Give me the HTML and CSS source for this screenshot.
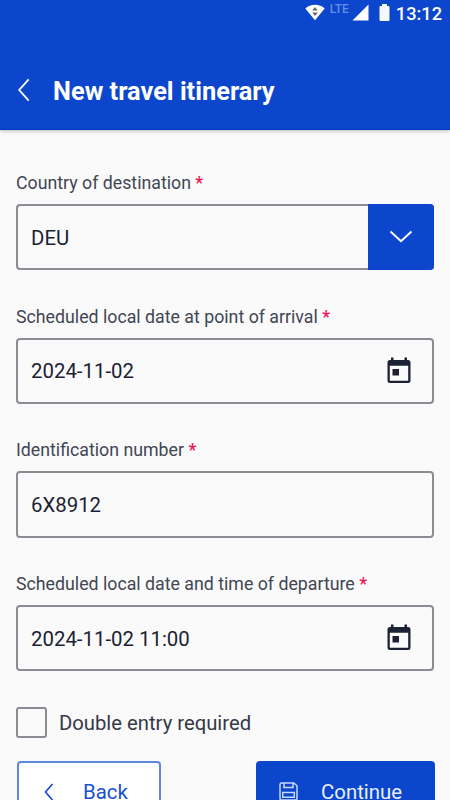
FILE: index.html
```html
<!DOCTYPE html>
<html lang="en">
<head>
    <meta charset="UTF-8">
    <meta name="viewport" content="width=device-width, initial-scale=1.0">
    <title>New travel itinerary</title>
    <link rel="stylesheet" href="styles.css">
</head>
<body>
    <header class="header">
        <div class="status-bar">
            <svg class="wifi" width="20" height="17" viewBox="0 0 20 17">
                <path d="M0.3 4.5C5.6-0.4 14.4-0.4 19.7 4.5L10 16.3Z" fill="#fff"/>
                <path d="M10 3l2.8 3.6H7.2zM10 12L7.2 8.4h5.6z" fill="#666"/>
            </svg>
            <span class="network">LTE</span>
            <svg class="signal" width="17" height="17" viewBox="0 0 17 17">
                <path d="M16.5 0.5v16H0.5z" fill="#fff"/>
            </svg>
            <svg class="battery" width="11" height="17" viewBox="0 0 11 17">
                <path d="M3 0h5v2h1.5q1 0 1 1v13q0 1-1 1h-8q-1 0-1-1V3q0-1 1-1H3z" fill="#f5f8ff"/>
            </svg>
            <span class="time">13:12</span>
        </div>
        <div class="title-bar">
            <svg class="arrow" width="12" height="24" viewBox="0 0 12 24">
                <path d="M10.7 1.3L1.2 12l9.5 10.7" fill="none" stroke="#fff" stroke-width="1.8"/>
            </svg>
            <h1>New travel itinerary</h1>
        </div>
    </header>

    <main class="form">
        <div class="field">
            <div class="label">Country of destination <span class="required">*</span></div>
            <div class="input select">
                <span class="value">DEU</span>
                <div class="select-button">
                    <svg width="24" height="14" viewBox="0 0 24 14">
                        <path d="M1.5 1.5L12 11.2 22.5 1.5" fill="none" stroke="#fff" stroke-width="2"/>
                    </svg>
                </div>
            </div>
        </div>
        <div class="field">
            <div class="label">Scheduled local date at point of arrival <span class="required">*</span></div>
            <div class="input">
                <span class="value">2024-11-02</span>
                <svg class="calendar" width="24" height="27" viewBox="0 0 24 27">
                    <path d="M3 3h18q2.5 0 2.5 2.5v18q0 2.5-2.5 2.5H3q-2.5 0-2.5-2.5v-18Q.5 3 3 3zM2.8 8.8v14.9h18.4V8.8zM4 .5h2.5V3H4zM17.5.5H20V3h-2.5zM5.5 12H12v6.5H5.5z" fill="#1b2233" fill-rule="evenodd"/>
                </svg>
            </div>
        </div>
        <div class="field">
            <div class="label">Identification number <span class="required">*</span></div>
            <div class="input"><span class="value">6X8912</span></div>
        </div>
        <div class="field">
            <div class="label">Scheduled local date and time of departure <span class="required">*</span></div>
            <div class="input">
                <span class="value">2024-11-02 11:00</span>
                <svg class="calendar" width="24" height="27" viewBox="0 0 24 27">
                    <path d="M3 3h18q2.5 0 2.5 2.5v18q0 2.5-2.5 2.5H3q-2.5 0-2.5-2.5v-18Q.5 3 3 3zM2.8 8.8v14.9h18.4V8.8zM4 .5h2.5V3H4zM17.5.5H20V3h-2.5zM5.5 12H12v6.5H5.5z" fill="#1b2233" fill-rule="evenodd"/>
                </svg>
            </div>
        </div>
        <div class="checkbox-row">
            <span class="checkbox"></span>
            <span>Double entry required</span>
        </div>
        <div class="buttons">
            <div class="button back">
                <svg width="10" height="18" viewBox="0 0 10 18">
                    <path d="M8.5 1L1.5 9l7 8" fill="none" stroke="#1650d0" stroke-width="1.7"/>
                </svg>
                <span>Back</span>
            </div>
            <div class="button continue">
                <svg width="19" height="19" viewBox="0 0 19 19" fill="none" stroke="#c5d7ff" stroke-width="1.5">
                    <path d="M2.5 1h12.3L18 3.8v12.7q0 1.5-1.5 1.5h-14Q1 18 1 16.5v-14Q1 1 2.5 1zM5 1v4.5h9V1M3.7 10.5h11.6v4.7H3.7z"/>
                </svg>
                <span>Continue</span>
            </div>
        </div>
    </main>
</body>
</html>
```
FILE: styles.css
```css
* {
    box-sizing: border-box;
}
body {
    margin: 0;
    height: 800px;
    overflow: hidden;
    font-family: Roboto, sans-serif;
    background-color: #fafafa;
    color: #1b2233;
}
svg {
    display: block;
    flex-shrink: 0;
}
.header {
    height: 130px;
    background-color: #0c46cc;
    border-bottom: 1px solid #0038c8;
    box-shadow: 0 1px 4px rgba(0, 0, 0, 0.25);
    color: white;
}
.status-bar {
    display: flex;
    justify-content: flex-end;
    height: 26px;
    padding: 4px 8px 0 0;
}
.wifi {
    margin-right: 5px;
}
.network {
    margin: -1px 3px 0 0;
    font-size: 12px;
    line-height: 12px;
    font-weight: 500;
    color: #658ce6;
}
.battery {
    margin: 0 6px 0 10px;
}
.time {
    font-size: 18.2px;
    line-height: 20px;
    font-weight: 500;
}
.title-bar {
    display: flex;
    align-items: center;
    gap: 23px;
    height: 30px;
    margin-top: 50px;
    padding-left: 18px;
}
.arrow {
    margin-bottom: 3px;
}
h1 {
    margin: 0;
    font-size: 25.4px;
    line-height: 30px;
    font-weight: 700;
}
.form {
    padding: 42px 16px 0;
}
.field {
    height: 133.7px;
}
.label {
    height: 32px;
    font-size: 17.75px;
    line-height: 22px;
    color: #414653;
    white-space: nowrap;
}
.required {
    font-weight: 500;
    color: #f0145a;
}
.input {
    display: flex;
    align-items: center;
    justify-content: space-between;
    width: 418px;
    height: 66.4px;
    padding: 0 21px 0 13px;
    border: 2px solid #8b8d95;
    border-radius: 4px;
    font-size: 20.4px;
    line-height: 25px;
}
.value {
    padding-top: 2px;
}
.calendar {
    margin-bottom: 1px;
}
.select {
    padding-right: 0;
    border-right: 0;
}
.select-button {
    display: flex;
    align-items: center;
    justify-content: center;
    width: 66px;
    height: 66px;
    flex-shrink: 0;
    background-color: #0c46cc;
    border-radius: 0 4px 4px 0;
}
.checkbox-row {
    display: flex;
    align-items: center;
    gap: 12px;
    height: 32px;
    font-size: 20.25px;
    color: #343946;
}
.checkbox {
    width: 31px;
    height: 31px;
    border: 2px solid #8b8d95;
    border-radius: 3px;
}
.buttons {
    display: flex;
    justify-content: space-between;
    margin-top: 22px;
    padding-left: 1px;
    margin-right: -1px;
}
.button {
    display: flex;
    align-items: center;
    height: 62px;
    border-radius: 4px;
    font-size: 20.4px;
}
.back {
    gap: 29px;
    width: 144px;
    padding-left: 25px;
    border: 2px solid #5d86e2;
    background-color: white;
    color: #1650d0;
}
.continue {
    gap: 23px;
    width: 179px;
    padding-left: 23px;
    background-color: #0c46cc;
    color: #e8efff;
}
```
